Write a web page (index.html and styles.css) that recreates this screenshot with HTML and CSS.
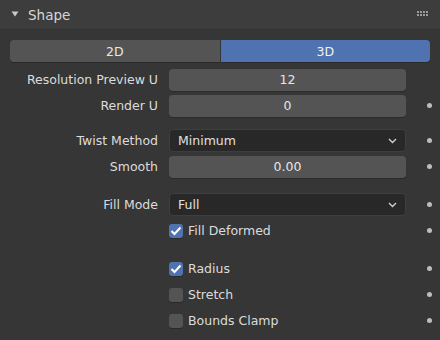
FILE: index.html
```html
<!DOCTYPE html>
<html lang="en">
<head>
<meta name="viewport" content="width=device-width, initial-scale=1">
<title>Shape</title>
<link rel="stylesheet" href="styles.css">
</head>
<body>

<div class="panel-head">
    <svg class="arrow" width="8" height="6" viewBox="0 0 8 6"><path d="M0.5 0.5 L7.5 0.5 L4 5.5 Z" fill="#c8c8c8"/></svg>
    <span class="panel-title">Shape</span>
    <svg class="grip" width="11" height="5" viewBox="0 0 11 5">
        <g fill="#9a9a9a">
            <rect x="0" y="0" width="2" height="2"/><rect x="3" y="0" width="2" height="2"/>
            <rect x="6" y="0" width="2" height="2"/><rect x="9" y="0" width="2" height="2"/>
            <rect x="0" y="3" width="2" height="2"/><rect x="3" y="3" width="2" height="2"/>
            <rect x="6" y="3" width="2" height="2"/><rect x="9" y="3" width="2" height="2"/>
        </g>
    </svg>
</div>

<div class="panel-body">
    <div class="toggle">
        <div class="toggle-btn">2D</div>
        <div class="toggle-btn active">3D</div>
    </div>

    <div class="row first">
        <div class="label">Resolution Preview U</div>
        <div class="num">12</div>
        <div class="dot-col"></div>
    </div>
    <div class="row">
        <div class="label">Render U</div>
        <div class="num">0</div>
        <div class="dot-col"><span class="dot"></span></div>
    </div>

    <div class="row group">
        <div class="label">Twist Method</div>
        <div class="menu">Minimum<svg class="chev" width="9" height="6" viewBox="0 0 9 6"><path d="M1 1 L4.5 4.5 L8 1" fill="none" stroke="#d0d0d0" stroke-width="1.4"/></svg></div>
        <div class="dot-col"><span class="dot"></span></div>
    </div>
    <div class="row">
        <div class="label">Smooth</div>
        <div class="num">0.00</div>
        <div class="dot-col"><span class="dot"></span></div>
    </div>

    <div class="row group-lg">
        <div class="label">Fill Mode</div>
        <div class="menu">Full<svg class="chev" width="9" height="6" viewBox="0 0 9 6"><path d="M1 1 L4.5 4.5 L8 1" fill="none" stroke="#d0d0d0" stroke-width="1.4"/></svg></div>
        <div class="dot-col"><span class="dot"></span></div>
    </div>
    <div class="row">
        <div class="label"></div>
        <div class="check-wrap"><span class="box on"><svg width="12" height="10" viewBox="0 0 12 10"><path d="M1.5 5 L4.5 8 L10.5 1.5" fill="none" stroke="#fff" stroke-width="2"/></svg></span>Fill Deformed</div>
        <div class="dot-col"><span class="dot"></span></div>
    </div>

    <div class="row group-xl">
        <div class="label"></div>
        <div class="check-wrap"><span class="box on"><svg width="12" height="10" viewBox="0 0 12 10"><path d="M1.5 5 L4.5 8 L10.5 1.5" fill="none" stroke="#fff" stroke-width="2"/></svg></span>Radius</div>
        <div class="dot-col"><span class="dot"></span></div>
    </div>
    <div class="row">
        <div class="label"></div>
        <div class="check-wrap"><span class="box"></span>Stretch</div>
        <div class="dot-col"><span class="dot"></span></div>
    </div>
    <div class="row">
        <div class="label"></div>
        <div class="check-wrap"><span class="box"></span>Bounds Clamp</div>
        <div class="dot-col"><span class="dot"></span></div>
    </div>
</div>

</body>
</html>
```

FILE: styles.css
```css
body {
    margin: 0;
    background-color: #363636;
    color: #dcdcdc;
    font-family: "DejaVu Sans", sans-serif;
    font-size: 12.5px;
}

.panel-head {
    height: 29px;
    background-color: #3d3d3d;
    border-bottom: 1px solid #323232;
    display: flex;
    align-items: center;
    padding: 0 12px 0 11px;
}
.arrow {
    margin-right: 9px;
    margin-top: -2px;
}
.panel-title {
    font-size: 13.5px;
    color: #d6d6d6;
    flex: 1;
}
.grip {
    margin-top: -2px;
}

.panel-body {
    padding: 10px 10px 0 10px;
}

.toggle {
    display: flex;
    height: 22px;
    gap: 1px;
}
.toggle-btn {
    flex: 1;
    background-color: #545454;
    display: flex;
    align-items: center;
    justify-content: center;
    color: #e6e6e6;
    box-shadow: 0 1px 0 #2a2a2a;
}
.toggle-btn:first-child {
    border-radius: 4px 0 0 4px;
}
.toggle-btn.active {
    background-color: #4f73b0;
    color: #f0f0f0;
    border-radius: 0 4px 4px 0;
}

.row {
    display: grid;
    grid-template-columns: 148px 237px 24px;
    column-gap: 11px;
    height: 23px;
    margin-top: 3px;
    align-items: center;
}
.row.first { margin-top: 6px; }
.row.group { margin-top: 12px; }
.row.group-lg { margin-top: 15px; }
.row.group-xl { margin-top: 15px; }

.label {
    text-align: right;
    white-space: nowrap;
}

.num {
    height: 22px;
    background-color: #545454;
    border-radius: 4px;
    box-shadow: 0 1px 0 #2b2b2b;
    display: flex;
    align-items: center;
    justify-content: center;
    color: #e6e6e6;
}

.menu {
    height: 21px;
    background-color: #282828;
    border: 1px solid #3e3e3e;
    border-radius: 4px;
    display: flex;
    align-items: center;
    justify-content: space-between;
    padding: 0 8px 0 8px;
    color: #e0e0e0;
}
.chev {
    margin-top: 1px;
}

.check-wrap {
    display: flex;
    align-items: center;
    gap: 5px;
}
.box {
    width: 14px;
    height: 14px;
    border-radius: 3px;
    background-color: #545454;
    box-shadow: 0 1px 0 #2a2a2a;
    display: flex;
    align-items: center;
    justify-content: center;
}
.box.on {
    background-color: #4f73b0;
}

.dot-col {
    display: flex;
    justify-content: center;
    padding-left: 1px;
}
.dot {
    width: 5px;
    height: 5px;
    border-radius: 50%;
    background-color: #bdbdbd;
}
```
